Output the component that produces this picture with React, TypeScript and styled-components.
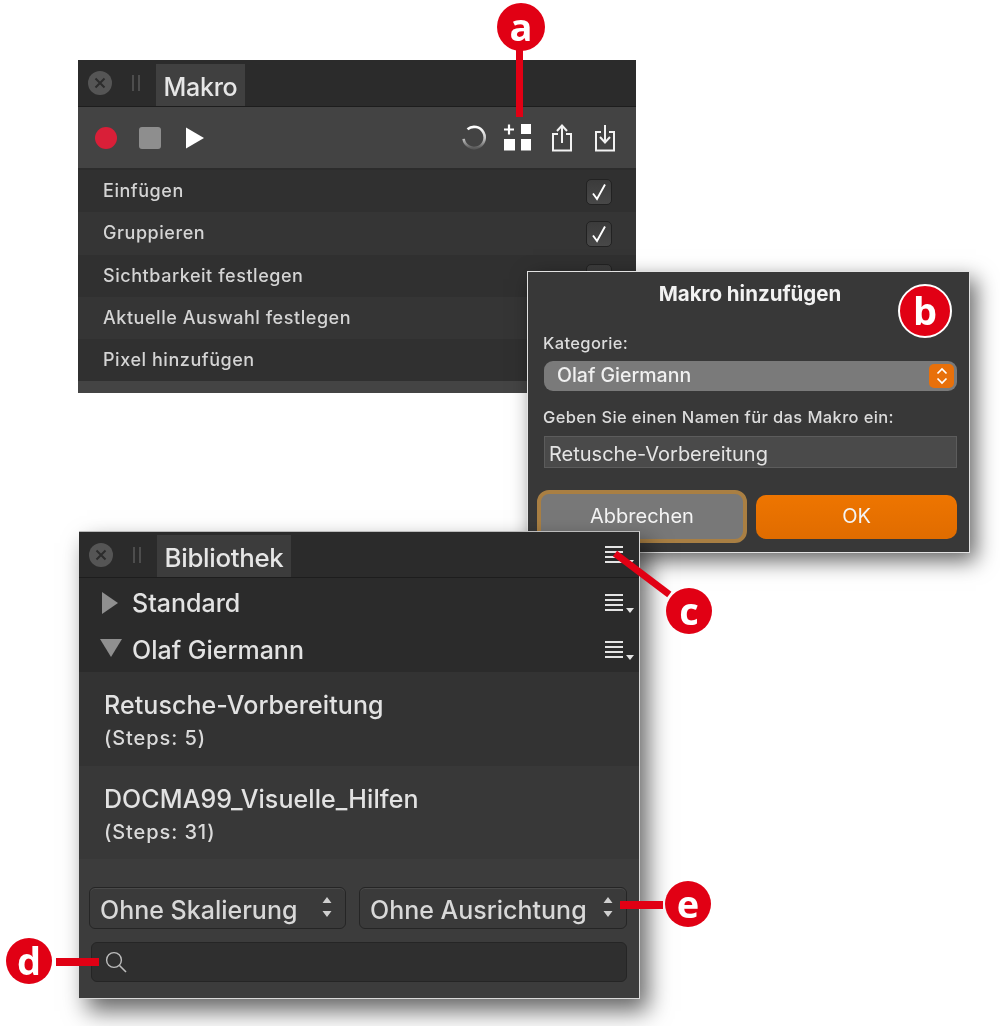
import React from "react";
import styled, { createGlobalStyle } from "styled-components";

const Global = createGlobalStyle`
  html, body { margin: 0; padding: 0; background: #fff; }
  body { font-family: "Inter", "Liberation Sans", sans-serif; }
`;

const Canvas = styled.div`
  position: relative;
  width: 1000px;
  height: 1026px;
  overflow: hidden;
  background: #fff;
  filter: blur(0.4px);
`;

const Panel = styled.section<{ $x: number; $y: number; $w: number; $h: number; $z: number }>`
  position: absolute;
  left: ${(p) => p.$x}px;
  top: ${(p) => p.$y}px;
  width: ${(p) => p.$w}px;
  height: ${(p) => p.$h}px;
  z-index: ${(p) => p.$z};
  display: flex;
  flex-direction: column;
  box-sizing: border-box;
  color: #e4e4e4;
`;

const MakroPanel = styled(Panel)`
  background: #444;
`;

const LibraryPanel = styled(Panel)`
  background: #3c3c3c;
  border: 1px solid #d8d8d8;
  border-left-width: 0;
  border-top-color: #bbb;
  box-shadow: 8px 12px 22px rgba(0, 0, 0, 0.6);
`;

const TabBar = styled.header<{ $h: number }>`
  height: ${(p) => p.$h}px;
  flex: none;
  display: flex;
  align-items: flex-end;
  background: #2b2b2b;
  border-bottom: 1px solid #1d1d1d;
  box-sizing: border-box;
  position: relative;
`;

const WindowControls = styled.div`
  width: 78px;
  height: 100%;
  flex: none;
  display: flex;
  align-items: center;
  padding-left: 9px;
  gap: 20px;
  box-sizing: border-box;
`;

const CloseButton = styled.span`
  width: 24px;
  height: 24px;
  border-radius: 50%;
  background: #555;
  display: flex;
  align-items: center;
  justify-content: center;
  flex: none;
  margin: 0 0 0 1px;
`;

const Grip = styled.span`
  width: 8px;
  height: 16px;
  border-left: 2px solid #4d4d4d;
  border-right: 2px solid #4d4d4d;
  box-sizing: border-box;
  flex: none;
`;

const Tab = styled.div<{ $w: number; $h: number; $bg: string; $fs: number; $pt: number }>`
  width: ${(p) => p.$w}px;
  height: ${(p) => p.$h}px;
  background: ${(p) => p.$bg};
  display: flex;
  align-items: center;
  justify-content: center;
  font-size: ${(p) => p.$fs}px;
  font-weight: 500;
  letter-spacing: -0.3px;
  color: #e6e6e6;
  padding-top: ${(p) => p.$pt}px;
  box-sizing: border-box;
`;

const Toolbar = styled.div`
  height: 61px;
  flex: none;
  display: flex;
  align-items: center;
  padding: 0 20px 0 17px;
  background: #434343;
  border-bottom: 2px solid #2c2c2c;
  box-sizing: content-box;
`;

const ToolGroup = styled.div`
  display: flex;
  align-items: center;
`;

const FileTools = styled(ToolGroup)`
  gap: 20px;
  margin-left: 17px;
  & > svg:last-child {
    margin-left: 1px;
  }
`;

const RecordDot = styled.span`
  width: 22px;
  height: 22px;
  border-radius: 50%;
  background: #d91f38;
  margin-right: 22px;
`;

const StopSquare = styled.span`
  width: 22px;
  height: 22px;
  border-radius: 3px;
  background: #8e8e8e;
  margin-right: 24px;
`;

const Spacer = styled.div`
  flex: 1;
`;

const StepList = styled.ul`
  list-style: none;
  margin: 0;
  padding: 0;
`;

const StepRow = styled.li<{ $alt: boolean }>`
  height: 42.25px;
  padding: 0 24px 1px 25px;
  display: flex;
  align-items: center;
  justify-content: space-between;
  background: ${(p) => (p.$alt ? "#353535" : "#303030")};
  font-size: 18px;
  font-weight: 500;
  letter-spacing: 0.55px;
  color: #d4d4d4;
  box-sizing: border-box;
`;

const CheckBox = styled.span`
  width: 26px;
  height: 26px;
  margin-top: 3px;
  border-radius: 5px;
  border: 1px solid #222;
  background: linear-gradient(#3b3b3b, #484848);
  display: flex;
  align-items: center;
  justify-content: center;
  box-sizing: border-box;
`;

const Dialog = styled(Panel)`
  background: #383838;
  border: 1px solid #e2e2e2;
  box-shadow: 6px 8px 20px rgba(0, 0, 0, 0.6);
  padding: 0 12px 0 15px;
`;

const DialogTitle = styled.h2`
  margin: 11px 0 0;
  height: 22px;
  line-height: 22px;
  text-align: center;
  font-size: 20.5px;
  font-weight: 700;
  color: #f2f2f2;
`;

const FieldLabel = styled.label<{ $mt: number }>`
  display: block;
  margin-top: ${(p) => p.$mt}px;
  font-size: 16.5px;
  font-weight: 500;
  letter-spacing: 0.37px;
  line-height: 20px;
  color: #dcdcdc;
`;

const SelectBox = styled.div`
  margin: 8px 0 0 1px;
  height: 30px;
  border-radius: 9px;
  background: #7a7a7a;
  display: flex;
  align-items: center;
  justify-content: space-between;
  padding: 0 3px 2px 13px;
  font-size: 19.5px;
  font-weight: 500;
  color: #f0f0f0;
  box-sizing: border-box;
`;

const Stepper = styled.span`
  width: 25px;
  height: 24px;
  border-radius: 5px;
  background: #e8700a;
  display: flex;
  align-items: center;
  justify-content: center;
  margin-top: 2px;
`;

const NameInput = styled.div`
  margin: 9px 0 0 1px;
  height: 32px;
  background: #4a4a4a;
  border: 1px solid #5c5c5c;
  box-sizing: border-box;
  padding: 3px 0 0 4px;
  display: flex;
  align-items: center;
  font-size: 20px;
  color: #e4e4e4;
`;

const DialogActions = styled.div`
  margin: 22px 0 0 -6px;
  display: flex;
  align-items: center;
  gap: 9px;
`;

const DialogButton = styled.button<{ $primary?: boolean }>`
  font: inherit;
  font-size: 20px;
  color: #f4f4f4;
  border-radius: ${(p) => (p.$primary ? "10px" : "12px")};
  width: ${(p) => (p.$primary ? "202px" : "211px")};
  height: ${(p) => (p.$primary ? "44px" : "53px")};
  background: ${(p) => (p.$primary ? "linear-gradient(#ee7500, #e06c00)" : "#787878")};
  border: ${(p) => (p.$primary ? "none" : "4px solid #a97f43")};
  padding: 0 0 2px;
  box-sizing: border-box;
`;

const GroupRow = styled.div<{ $h: number }>`
  height: ${(p) => p.$h}px;
  flex: none;
  display: flex;
  align-items: center;
  position: relative;
  padding-left: 53px;
  font-size: 25px;
  font-weight: 500;
  color: #e2e2e2;
`;

const GroupsBlock = styled.div`
  background: #2b2b2b;
  flex: none;
`;

const TreeArrow = styled.svg`
  position: absolute;
  left: 20px;
  top: 50%;
  transform: translateY(-50%);
`;

const DownArrow = styled(TreeArrow)`
  margin-top: -2px;
`;

const MenuGlyph = styled.svg`
  position: absolute;
  right: 4px;
  top: 50%;
  transform: translateY(-50%);
`;

const MacroItem = styled.article<{ $bg: string; $h: number }>`
  height: ${(p) => p.$h}px;
  flex: none;
  background: ${(p) => p.$bg};
  padding: 17px 0 0 25px;
  box-sizing: border-box;
`;

const MacroName = styled.div`
  font-size: 25px;
  font-weight: 500;
  letter-spacing: 0.08px;
  line-height: 32px;
  color: #e2e2e2;
`;

const MacroSteps = styled.div`
  font-size: 20px;
  font-weight: 500;
  letter-spacing: 0.9px;
  line-height: 24px;
  margin-top: 5px;
  color: #dadada;
`;

const Footer = styled.footer`
  flex: 1;
  padding: 28px 12px 0 10px;
  display: grid;
  grid-template-columns: 257px 268px;
  column-gap: 13px;
  row-gap: 13px;
  grid-auto-rows: min-content;
`;

const DropDown = styled.div`
  height: 42px;
  border-radius: 6px;
  border: 1px solid #252525;
  background: #3a3a3a;
  box-shadow: inset 0 1px 0 #4a4a4a;
  display: flex;
  align-items: center;
  justify-content: space-between;
  padding: 3px 12px 0 10px;
  box-sizing: border-box;
  font-size: 25px;
  font-weight: 500;
  color: #d8d8d8;
`;

const UpDownSlot = styled.span`
  display: flex;
  margin-top: -5px;
`;

const SearchField = styled.div`
  grid-column: 1 / -1;
  margin-left: 2px;
  height: 40px;
  border-radius: 6px;
  background: #2f2f2f;
  border: 1px solid #252525;
  display: flex;
  align-items: center;
  padding-left: 12px;
  box-sizing: border-box;
`;

const Callout = styled.span<{ $cx: number; $cy: number; $r: number; $ring?: boolean }>`
  position: absolute;
  left: ${(p) => p.$cx - p.$r}px;
  top: ${(p) => p.$cy - p.$r}px;
  width: ${(p) => p.$r * 2}px;
  height: ${(p) => p.$r * 2}px;
  border-radius: 50%;
  background: #e10014;
  border: ${(p) => (p.$ring ? "2px solid #fff" : "none")};
  box-sizing: border-box;
  color: #fff;
  font-family: "Open Sans", "Liberation Sans", sans-serif;
  font-weight: 700;
  font-size: 38px;
  line-height: 42px;
  display: flex;
  align-items: center;
  justify-content: center;
  padding-bottom: 3px;
  z-index: 6;
`;

const Leader = styled.span<{ $x: number; $y: number; $w: number; $h: number; $rot?: number }>`
  position: absolute;
  left: ${(p) => p.$x}px;
  top: ${(p) => p.$y}px;
  width: ${(p) => p.$w}px;
  height: ${(p) => p.$h}px;
  background: #e10014;
  transform: rotate(${(p) => p.$rot ?? 0}deg);
  transform-origin: 0 50%;
  z-index: 5;
`;

const CloseIcon = () => (
  <svg width="14" height="14" viewBox="0 0 14 14">
    <path d="M2.5 2.5l9 9M11.5 2.5l-9 9" stroke="#2c2c2c" strokeWidth="2" />
  </svg>
);

const Play = () => (
  <svg width="20" height="22" viewBox="0 0 20 22">
    <path d="M1 0.5L19 11 1 21.5z" fill="#fff" />
  </svg>
);

const Spinner = () => (
  <svg width="26" height="26" viewBox="0 0 28 28">
    <defs>
      <linearGradient id="spin" x1="0" y1="0" x2="0" y2="1">
        <stop offset="0" stopColor="#fff" />
        <stop offset="0.55" stopColor="#c4c4c4" />
        <stop offset="1" stopColor="#5a5a5a" />
      </linearGradient>
    </defs>
    <path d="M7 4.5A11.4 11.4 0 1 1 2.8 15" fill="none" stroke="url(#spin)" strokeWidth="2.8" />
  </svg>
);

const AddMacro = () => (
  <svg width="27" height="27" viewBox="0 0 27 27">
    <path d="M5 0.5v10M0 5.5h10" stroke="#fff" strokeWidth="2.2" />
    <rect x="17" y="0" width="10" height="10" fill="#fff" />
    <rect x="0" y="15" width="11" height="11.5" fill="#fff" />
    <rect x="17" y="15" width="10" height="11.5" fill="#fff" />
  </svg>
);

const ExportIcon = () => (
  <svg width="22" height="28" viewBox="0 0 22 28">
    <path d="M7 10H2v16.5h18V10h-5" fill="none" stroke="#f2f2f2" strokeWidth="2" />
    <path d="M11 19V2M6 7l5-5.5L16 7" fill="none" stroke="#f2f2f2" strokeWidth="2" />
  </svg>
);

const ImportIcon = () => (
  <svg width="22" height="28" viewBox="0 0 22 28">
    <path d="M7 8H2v18.5h18V8h-5" fill="none" stroke="#f2f2f2" strokeWidth="2" />
    <path d="M11 1v17M6 13l5 5.5 5-5.5" fill="none" stroke="#f2f2f2" strokeWidth="2" />
  </svg>
);

const Check = () => (
  <svg width="16" height="18" viewBox="0 0 16 18">
    <path d="M2 10.5l4 5.5L14 1.5" fill="none" stroke="#fff" strokeWidth="1.9" />
  </svg>
);

const StepperGlyph = () => (
  <svg width="12" height="18" viewBox="0 0 12 18">
    <path d="M1.5 6.5L6 2l4.5 4.5M1.5 11.5L6 16l4.5-4.5" fill="none" stroke="#fff" strokeWidth="1.7" />
  </svg>
);

const MenuIcon = () => (
  <MenuGlyph width="30" height="20" viewBox="0 0 30 20">
    <path d="M0 2h18M0 7h18M0 12h18M0 17h18" stroke="#e4e4e4" strokeWidth="2" />
    <path d="M21 15h8l-4 5z" fill="#e4e4e4" />
  </MenuGlyph>
);

const UpDown = () => (
  <UpDownSlot>
    <svg width="12" height="22" viewBox="0 0 12 22">
      <path d="M6 1l4.5 6h-9zM6 21l-4.5-6h9z" fill="#cfcfcf" />
    </svg>
  </UpDownSlot>
);

const SearchIcon = () => (
  <svg width="24" height="24" viewBox="0 0 24 24">
    <circle cx="10" cy="10" r="7.4" fill="none" stroke="#bdbdbd" strokeWidth="1.4" />
    <path d="M15.5 15.5L22 22" stroke="#bdbdbd" strokeWidth="1.6" />
  </svg>
);

const steps = ["Einfügen", "Gruppieren", "Sichtbarkeit festlegen", "Aktuelle Auswahl festlegen", "Pixel hinzufügen"];

export default function App() {
  return (
    <Canvas>
      <Global />

      <MakroPanel $x={78} $y={60} $w={558} $h={333} $z={1}>
        <TabBar $h={47}>
          <WindowControls>
            <CloseButton><CloseIcon /></CloseButton>
            <Grip />
          </WindowControls>
          <Tab $w={89} $h={42} $bg="#404040" $fs={25} $pt={4}>Makro</Tab>
        </TabBar>
        <Toolbar>
          <ToolGroup>
            <RecordDot />
            <StopSquare />
            <Play />
          </ToolGroup>
          <Spacer />
          <ToolGroup>
            <Spinner />
          </ToolGroup>
          <FileTools>
            <AddMacro />
            <ExportIcon />
            <ImportIcon />
          </FileTools>
        </Toolbar>
        <StepList>
          {steps.map((s, i) => (
            <StepRow key={s} $alt={i % 2 === 1}>
              {s}
              {i < 3 && <CheckBox>{i < 2 && <Check />}</CheckBox>}
            </StepRow>
          ))}
        </StepList>
      </MakroPanel>

      <Dialog $x={527} $y={271} $w={443} $h={282} $z={2}>
        <DialogTitle>Makro hinzufügen</DialogTitle>
        <FieldLabel $mt={28}>Kategorie:</FieldLabel>
        <SelectBox>
          Olaf Giermann
          <Stepper><StepperGlyph /></Stepper>
        </SelectBox>
        <FieldLabel $mt={16}>Geben Sie einen Namen für das Makro ein:</FieldLabel>
        <NameInput>Retusche-Vorbereitung</NameInput>
        <DialogActions>
          <DialogButton>Abbrechen</DialogButton>
          <DialogButton $primary>OK</DialogButton>
        </DialogActions>
      </Dialog>

      <LibraryPanel $x={79} $y={531} $w={561} $h={468} $z={3}>
        <TabBar $h={46}>
          <WindowControls>
            <CloseButton><CloseIcon /></CloseButton>
            <Grip />
          </WindowControls>
          <Tab $w={134} $h={42} $bg="#3c3c3c" $fs={25.8} $pt={2}>Bibliothek</Tab>
          <MenuIcon />
        </TabBar>
        <GroupsBlock>
          <GroupRow $h={49}>
            Standard
            <TreeArrow width="20" height="22" viewBox="0 0 20 22">
              <path d="M3 0l16 11L3 22z" fill="#8f8f8f" />
            </TreeArrow>
            <MenuIcon />
          </GroupRow>
          <GroupRow $h={45}>
            Olaf Giermann
            <DownArrow width="24" height="18" viewBox="0 0 24 18">
              <path d="M1 0h22L12 18z" fill="#8f8f8f" />
            </DownArrow>
            <MenuIcon />
          </GroupRow>
        </GroupsBlock>
        <MacroItem $bg="#333333" $h={94}>
          <MacroName>Retusche-Vorbereitung</MacroName>
          <MacroSteps>(Steps: 5)</MacroSteps>
        </MacroItem>
        <MacroItem $bg="#383838" $h={93}>
          <MacroName>DOCMA99_Visuelle_Hilfen</MacroName>
          <MacroSteps>(Steps: 31)</MacroSteps>
        </MacroItem>
        <Footer>
          <DropDown>Ohne Skalierung<UpDown /></DropDown>
          <DropDown>Ohne Ausrichtung<UpDown /></DropDown>
          <SearchField><SearchIcon /></SearchField>
        </Footer>
      </LibraryPanel>

      <Leader $x={516} $y={50} $w={7} $h={67} />
      <Callout $cx={521} $cy={27} $r={24}>a</Callout>

      <Callout $cx={925} $cy={311} $r={27} $ring>b</Callout>

      <Leader $x={615} $y={550} $w={68} $h={7} $rot={37} />
      <Callout $cx={689} $cy={611} $r={23}>c</Callout>

      <Leader $x={56} $y={958} $w={43} $h={8} />
      <Callout $cx={29} $cy={961} $r={23}>d</Callout>

      <Leader $x={620} $y={901} $w={43} $h={8} />
      <Callout $cx={688} $cy={904} $r={23}>e</Callout>
    </Canvas>
  );
}
